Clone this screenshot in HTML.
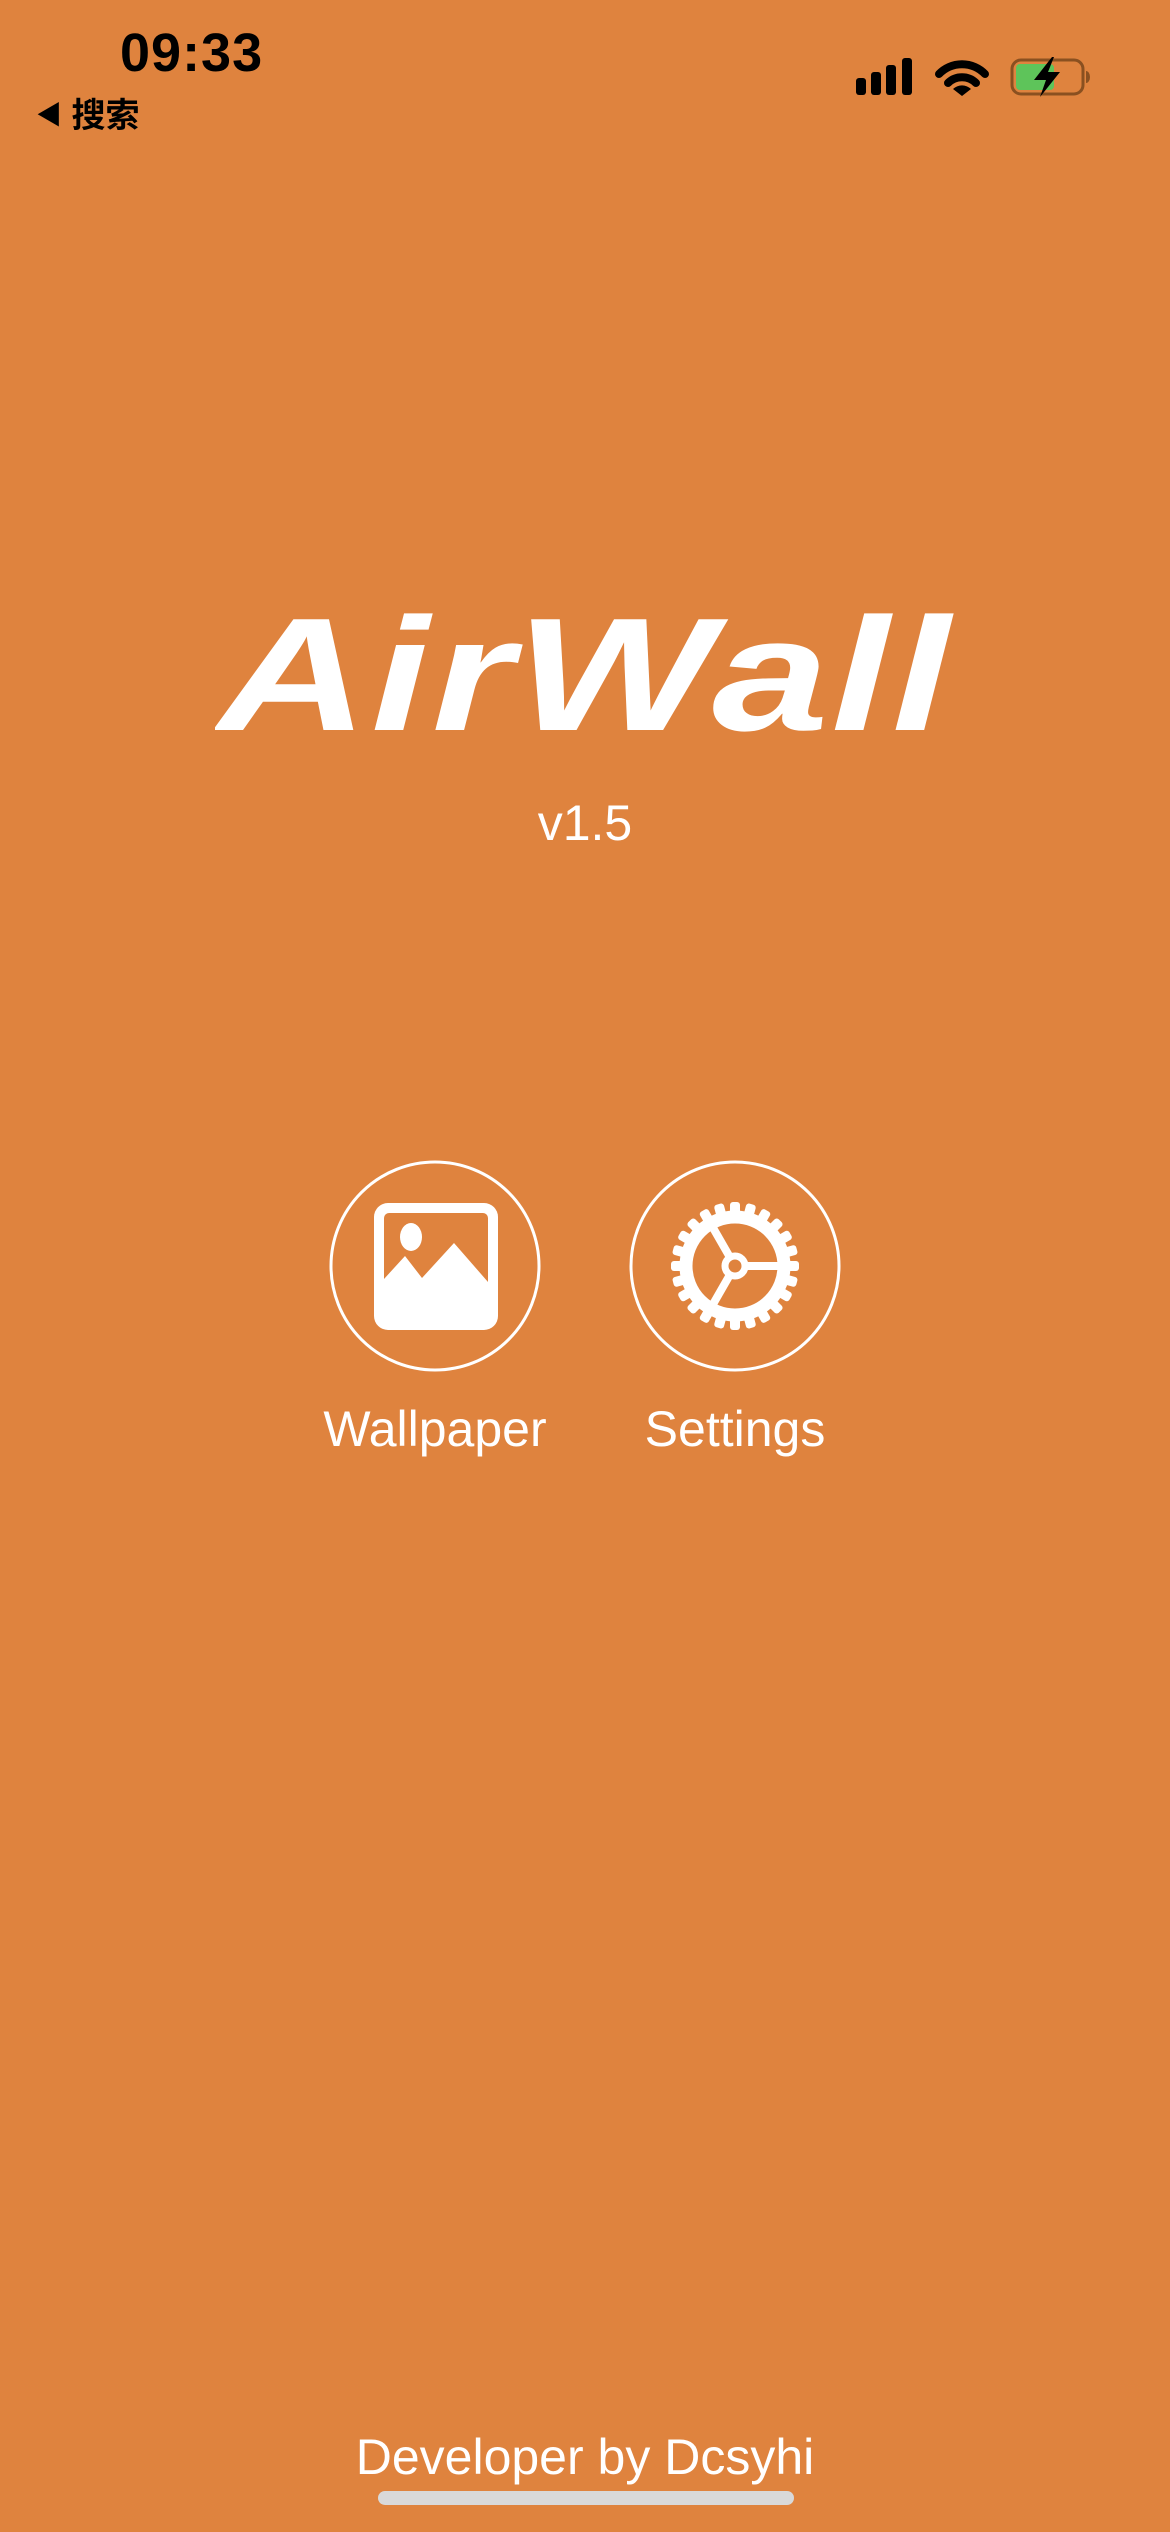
<!DOCTYPE html>
<html><head><meta charset="utf-8"><style>
html,body{margin:0;padding:0}
body{width:1170px;height:2532px;background:#DF833E;position:relative;overflow:hidden;font-family:"Liberation Sans","Noto Sans CJK SC",sans-serif;color:#fff}
.abs{position:absolute}
</style></head><body>
<div class="abs" style="left:120px;top:22px;font-size:54px;font-weight:bold;color:#000;letter-spacing:1px">09:33</div>
<div class="abs" style="left:36px;top:88px;font-size:34px;color:#000;font-weight:bold"><span style="font-size:26px;vertical-align:3px">◀</span> 搜索</div>
<svg class="abs" style="left:850px;top:55px" width="250" height="45" viewBox="0 0 250 45">
<rect x="6" y="23" width="10" height="17" rx="3" fill="#000"/>
<rect x="21" y="17" width="10" height="23" rx="3" fill="#000"/>
<rect x="36" y="10" width="10" height="30" rx="3" fill="#000"/>
<rect x="52" y="3" width="10" height="37" rx="3" fill="#000"/>
<path d="M89 19 A32 32 0 0 1 135 19" stroke="#000" stroke-width="8" fill="none" stroke-linecap="round"/>
<path d="M98 28 A20 20 0 0 1 126 28" stroke="#000" stroke-width="8" fill="none" stroke-linecap="round"/>
<path d="M103 34 L112 41 L121 34 A13 13 0 0 0 103 34Z" fill="#000"/>
<rect x="162" y="5" width="71" height="34" rx="9" fill="none" stroke="#8a5020" stroke-width="3"/>
<rect x="166" y="9" width="38" height="26" rx="4" fill="#5ec45a"/>
<path d="M236 16 a4 6 0 0 1 0 12z" fill="#8a5020"/>
<path d="M202 2 L184 25 L196 25 L190 42 L210 17 L198 17 L204 2Z" fill="#000"/>
</svg>
<div class="abs" style="left:215px;top:560px;width:740px;height:200px;overflow:hidden">
<div style="position:absolute;left:50%;top:35px;transform:translateX(-50%) scaleX(1.3);font-size:161px;font-weight:bold;font-style:italic;line-height:161px;white-space:nowrap;letter-spacing:2px">AirWall</div>
</div>
<div class="abs" style="left:0;width:1170px;top:794px;text-align:center;font-size:50px">v1.5</div>
<svg class="abs" style="left:328px;top:1159px" width="214" height="214" viewBox="0 0 214 214">
<circle cx="107" cy="107" r="104" fill="none" stroke="#fff" stroke-width="3"/>
<rect x="46" y="44" width="124" height="127" rx="14" fill="#fff"/>
<rect x="56" y="54" width="104" height="95" rx="5" fill="#DF833E"/>
<path d="M56 149 L56 120 L77 97 L94 119 L126 84 L160 123 L160 149Z" fill="#fff"/>
<ellipse cx="83" cy="78" rx="11" ry="14" fill="#fff"/>
</svg>
<svg class="abs" style="left:628px;top:1159px" width="214" height="214" viewBox="0 0 214 214">
<circle cx="107" cy="107" r="104" fill="none" stroke="#fff" stroke-width="3"/>
<g transform="translate(107,107)">
<circle r="49" fill="none" stroke="#fff" stroke-width="13"/>
<g fill="#fff">
<rect x="-5" y="-64" width="10" height="14" rx="3" transform="rotate(0)"/>
<rect x="-5" y="-64" width="10" height="14" rx="3" transform="rotate(15)"/>
<rect x="-5" y="-64" width="10" height="14" rx="3" transform="rotate(30)"/>
<rect x="-5" y="-64" width="10" height="14" rx="3" transform="rotate(45)"/>
<rect x="-5" y="-64" width="10" height="14" rx="3" transform="rotate(60)"/>
<rect x="-5" y="-64" width="10" height="14" rx="3" transform="rotate(75)"/>
<rect x="-5" y="-64" width="10" height="14" rx="3" transform="rotate(90)"/>
<rect x="-5" y="-64" width="10" height="14" rx="3" transform="rotate(105)"/>
<rect x="-5" y="-64" width="10" height="14" rx="3" transform="rotate(120)"/>
<rect x="-5" y="-64" width="10" height="14" rx="3" transform="rotate(135)"/>
<rect x="-5" y="-64" width="10" height="14" rx="3" transform="rotate(150)"/>
<rect x="-5" y="-64" width="10" height="14" rx="3" transform="rotate(165)"/>
<rect x="-5" y="-64" width="10" height="14" rx="3" transform="rotate(180)"/>
<rect x="-5" y="-64" width="10" height="14" rx="3" transform="rotate(195)"/>
<rect x="-5" y="-64" width="10" height="14" rx="3" transform="rotate(210)"/>
<rect x="-5" y="-64" width="10" height="14" rx="3" transform="rotate(225)"/>
<rect x="-5" y="-64" width="10" height="14" rx="3" transform="rotate(240)"/>
<rect x="-5" y="-64" width="10" height="14" rx="3" transform="rotate(255)"/>
<rect x="-5" y="-64" width="10" height="14" rx="3" transform="rotate(270)"/>
<rect x="-5" y="-64" width="10" height="14" rx="3" transform="rotate(285)"/>
<rect x="-5" y="-64" width="10" height="14" rx="3" transform="rotate(300)"/>
<rect x="-5" y="-64" width="10" height="14" rx="3" transform="rotate(315)"/>
<rect x="-5" y="-64" width="10" height="14" rx="3" transform="rotate(330)"/>
<rect x="-5" y="-64" width="10" height="14" rx="3" transform="rotate(345)"/>
</g>
<g stroke="#fff" stroke-width="8">
<line x1="12" y1="0" x2="46" y2="0"/>
<line x1="-6" y1="-10.4" x2="-23" y2="-40"/>
<line x1="-6" y1="10.4" x2="-23" y2="40"/>
</g>
<circle r="10" fill="none" stroke="#fff" stroke-width="7"/>
</g>
</svg>
<div class="abs" style="left:285px;width:300px;top:1400px;text-align:center;font-size:50px">Wallpaper</div>
<div class="abs" style="left:585px;width:300px;top:1400px;text-align:center;font-size:50px">Settings</div>
<div class="abs" style="left:0;width:1170px;top:2428px;text-align:center;font-size:50px">Developer by Dcsyhi</div>
<div class="abs" style="left:378px;top:2491px;width:416px;height:14px;border-radius:7px;background:#d9d9d9"></div>
</body></html>
